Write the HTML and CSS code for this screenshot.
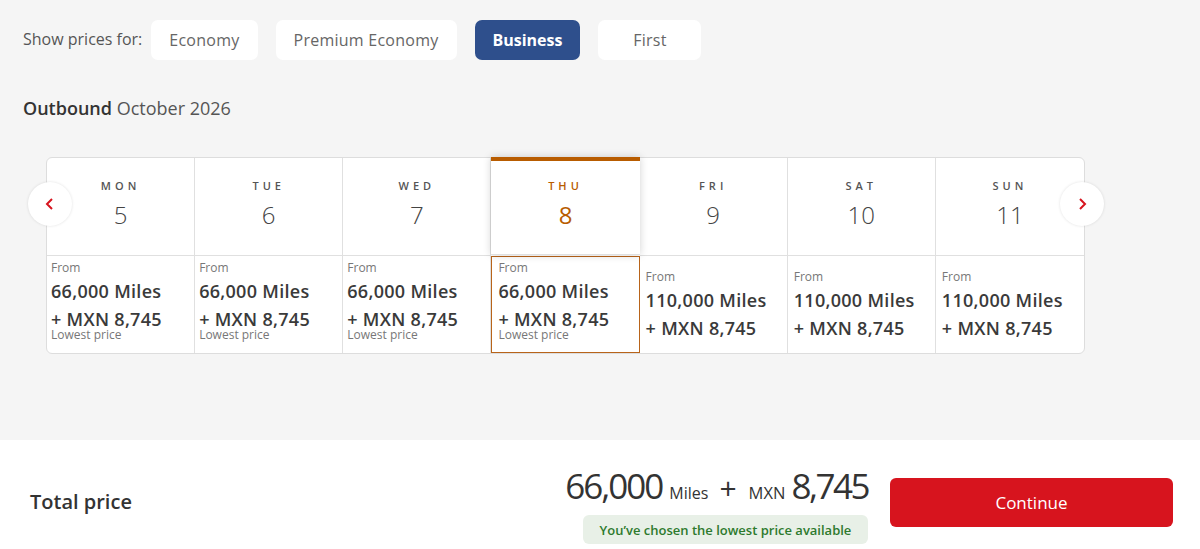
FILE: index.html
```html
<!DOCTYPE html>
<html lang="en">
<head>
<meta charset="utf-8">
<title>Flight calendar</title>
<link rel="stylesheet" href="styles.css">
</head>
<body>
<main class="top">
  <div class="filter">
    <span class="filter-label">Show prices for:</span>
    <button class="pill">Economy</button>
    <button class="pill">Premium Economy</button>
    <button class="pill active">Business</button>
    <button class="pill">First</button>
  </div>
  <h2 class="heading"><strong>Outbound</strong> October 2026</h2>
  <div class="calendar">
    <button class="nav nav-prev" aria-label="Previous"><svg width="12" height="14" viewBox="0 0 12 14"><path d="M8 2 L3 7 L8 12" fill="none" stroke="#d7141e" stroke-width="2"/></svg></button>
    <div class="grid">
      <div class="day"><span class="dow">MON</span><span class="num">5</span></div>
      <div class="day"><span class="dow">TUE</span><span class="num">6</span></div>
      <div class="day"><span class="dow">WED</span><span class="num">7</span></div>
      <div class="day sel"><span class="dow">THU</span><span class="num">8</span></div>
      <div class="day"><span class="dow">FRI</span><span class="num">9</span></div>
      <div class="day"><span class="dow">SAT</span><span class="num">10</span></div>
      <div class="day last"><span class="dow">SUN</span><span class="num">11</span></div>

      <div class="price low"><span class="from">From</span><span class="miles">66,000 Miles</span><span class="cash">+ MXN 8,745</span><span class="lowest">Lowest price</span></div>
      <div class="price low"><span class="from">From</span><span class="miles">66,000 Miles</span><span class="cash">+ MXN 8,745</span><span class="lowest">Lowest price</span></div>
      <div class="price low"><span class="from">From</span><span class="miles">66,000 Miles</span><span class="cash">+ MXN 8,745</span><span class="lowest">Lowest price</span></div>
      <div class="price low sel"><span class="from">From</span><span class="miles">66,000 Miles</span><span class="cash">+ MXN 8,745</span><span class="lowest">Lowest price</span></div>
      <div class="price"><span class="from">From</span><span class="miles">110,000 Miles</span><span class="cash">+ MXN 8,745</span></div>
      <div class="price"><span class="from">From</span><span class="miles">110,000 Miles</span><span class="cash">+ MXN 8,745</span></div>
      <div class="price last"><span class="from">From</span><span class="miles">110,000 Miles</span><span class="cash">+ MXN 8,745</span></div>
    </div>
    <button class="nav nav-next" aria-label="Next"><svg width="12" height="14" viewBox="0 0 12 14"><path d="M4 2 L9 7 L4 12" fill="none" stroke="#d7141e" stroke-width="2"/></svg></button>
  </div>
</main>
<footer class="footer">
  <div class="total-label">Total price</div>
  <div class="total">
    <div class="total-line"><span class="big">66,000</span><span class="unit">Miles</span><span class="plus">+</span><span class="unit cur">MXN</span><span class="big cash-big">8,745</span></div>
    <div class="badge">You’ve chosen the lowest price available</div>
  </div>
  <button class="continue">Continue</button>
</footer>
</body>
</html>
```
FILE: styles.css
```css
* { box-sizing: border-box; }
html, body { margin: 0; }
body {
  background: #f5f5f5;
  font-family: "Open Sans", "Noto Sans", sans-serif;
  color: #333;
  height: 549px;
  overflow: hidden;
}
button { font-family: inherit; border: none; cursor: pointer; }

.top { padding: 20px 0 0 23px; height: 440px; }

.filter { display: flex; align-items: center; gap: 18px; }
.filter-label { font-size: 16px; color: #555; margin-right: -9px; margin-top: -2px; }
.pill {
  height: 40px;
  min-width: 103px;
  padding: 0 18px;
  background: #fff;
  border-radius: 7px;
  font-size: 16px;
  letter-spacing: 0.25px;
  color: #666;
}
.pill.active { background: #2e4f8c; color: #fff; font-weight: 700; letter-spacing: 0; }

.heading {
  margin: 36px 0 0;
  font-size: 18px;
  line-height: 24px;
  font-weight: 400;
  color: #555;
}
.heading strong { color: #333; font-weight: 600; }

.calendar { position: relative; margin: 37px 0 0 23px; width: 1039px; }
.grid {
  display: grid;
  grid-template-columns: repeat(7, 1fr);
  background: #fff;
  border: 1px solid #ddd;
  border-radius: 6px;
}
.day {
  height: 98px;
  display: flex;
  flex-direction: column;
  align-items: center;
  border-right: 1px solid #e0e0e0;
  border-bottom: 1px solid #e0e0e0;
  padding-top: 20px;
}
.day.last, .price.last { border-right: none; }
.dow { font-size: 11px; letter-spacing: 4px; font-weight: 600; color: #555; line-height: 16px; }
.num { font-size: 24px; font-weight: 300; color: #444; line-height: 34px; margin-top: 4px; }
.day.sel {
  border-top: 4px solid #b85c00;
  margin-top: -1px;
  padding-top: 17px;
  box-shadow: 0 0 8px rgba(0,0,0,0.18);
  position: relative;
  z-index: 1;
  border-right: none;
}
.day.sel .dow, .day.sel .num { color: #b85c00; }
.day.sel .num { font-weight: 400; }

.price {
  height: 97px;
  display: flex;
  flex-direction: column;
  border-right: 1px solid #e0e0e0;
  padding: 12px 0 0 6px;
}
.price.low { padding-top: 3px; padding-left: 4px; }
.price.sel { border: 1px solid #b8641a; padding-left: 6px; padding-top: 2px; }
.from { font-size: 12px; line-height: 18px; color: #777; }
.miles, .cash { font-size: 18px; line-height: 28px; font-weight: 600; letter-spacing: 0.3px; color: #3a3a3a; }
.lowest { font-size: 12px; line-height: 12px; color: #777; margin-top: -4px; }

.nav {
  position: absolute;
  top: 25px;
  width: 44px;
  height: 44px;
  border-radius: 50%;
  background: #fff;
  box-shadow: 0 0 3px rgba(0,0,0,0.12);
  display: flex;
  align-items: center;
  justify-content: center;
  z-index: 2;
  padding: 0;
}
.nav-prev { left: -18px; }
.nav-next { right: -19px; }

.footer {
  background: #fff;
  height: 109px;
  display: flex;
  align-items: flex-start;
  padding: 28px 27px 0 30px;
}
.total-label { font-size: 20px; line-height: 28px; font-weight: 600; color: #333; margin-top: 20px; }
.total { margin-left: auto; display: flex; flex-direction: column; align-items: flex-end; }
.total-line { display: flex; align-items: baseline; height: 36px; line-height: 36px; color: #333; }
.big { font-size: 35px; letter-spacing: -2px; }
.cash-big { letter-spacing: -2.5px; }
.unit { font-size: 16px; margin: 0 11px 0 7px; }
.unit.cur { font-size: 16.5px; margin: 0 6px 0 0; }
.plus { font-size: 30px; margin: 0 12px 0 0; }
.badge {
  margin-top: 11px;
  height: 29px;
  width: 285px;
  background: #e8f0e7;
  border-radius: 6px;
  color: #2d7a2d;
  font-size: 13px;
  font-weight: 600;
  display: flex;
  align-items: center;
  justify-content: center;
}
.continue {
  margin: 10px 0 0 22px;
  width: 283px;
  height: 49px;
  background: #d7141e;
  color: #fff;
  font-size: 17px;
  font-weight: 500;
  border-radius: 6px;
}
```
